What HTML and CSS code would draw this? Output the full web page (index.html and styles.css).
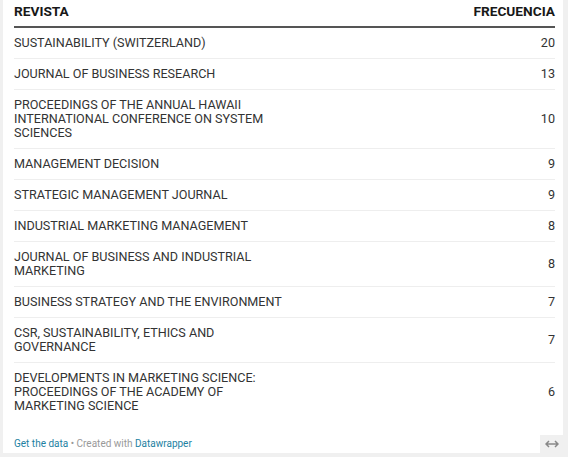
FILE: index.html
```html
<!DOCTYPE html>
<html lang="es">
<head>
    <meta charset="UTF-8">
    <title>Revistas</title>
    <link rel="stylesheet" href="styles.css">
</head>
<body>
    <div class="chart">
        <table class="table">
            <thead>
                <tr>
                    <th class="name">REVISTA</th>
                    <th class="num">FRECUENCIA</th>
                </tr>
            </thead>
            <tbody>
                <tr><td class="name">SUSTAINABILITY (SWITZERLAND)</td><td class="num">20</td></tr>
                <tr><td class="name">JOURNAL OF BUSINESS RESEARCH</td><td class="num">13</td></tr>
                <tr><td class="name">PROCEEDINGS OF THE ANNUAL HAWAII INTERNATIONAL CONFERENCE ON SYSTEM SCIENCES</td><td class="num">10</td></tr>
                <tr><td class="name">MANAGEMENT DECISION</td><td class="num">9</td></tr>
                <tr><td class="name">STRATEGIC MANAGEMENT JOURNAL</td><td class="num">9</td></tr>
                <tr><td class="name">INDUSTRIAL MARKETING MANAGEMENT</td><td class="num">8</td></tr>
                <tr><td class="name">JOURNAL OF BUSINESS AND INDUSTRIAL MARKETING</td><td class="num">8</td></tr>
                <tr><td class="name">BUSINESS STRATEGY AND THE ENVIRONMENT</td><td class="num">7</td></tr>
                <tr><td class="name">CSR, SUSTAINABILITY, ETHICS AND GOVERNANCE</td><td class="num">7</td></tr>
                <tr><td class="name">DEVELOPMENTS IN MARKETING SCIENCE: PROCEEDINGS OF THE ACADEMY OF MARKETING SCIENCE</td><td class="num">6</td></tr>
            </tbody>
        </table>
        <div class="footer">
            <a href="#">Get the data</a> <span class="sep">•</span> Created with <a href="#">Datawrapper</a>
        </div>
    </div>
    <div class="resize">
        <svg width="14" height="8" viewBox="0 0 14 8">
            <path d="M1 4h12M4 1L1 4l3 3M10 1l3 3-3 3" fill="none" stroke="#888" stroke-width="1.5"/>
        </svg>
    </div>
</body>
</html>
```

FILE: styles.css
```css
body {
    margin: 0;
    background: #f0f0f0;
    font-family: Roboto, "Liberation Sans", sans-serif;
    color: #333;
    width: 568px;
    height: 457px;
    position: relative;
    overflow: hidden;
}
.chart {
    margin-left: 3px;
    width: 560px;
    height: 453px;
    background: white;
    box-sizing: border-box;
    padding: 0 8px 0 11px;
    display: flex;
    flex-direction: column;
}
.table {
    width: 100%;
    border-collapse: collapse;
    table-layout: fixed;
    font-size: 12.6px;
}
th {
    font-weight: bold;
    font-size: 13.7px;
    color: #181818;
    padding: 4px 0 7px;
    border-bottom: 2px solid #555;
    line-height: 15px;
}
td {
    padding: 8px 0 8px;
    border-bottom: 1px solid #eee;
    line-height: 14px;
}
tbody tr:last-child td {
    border-bottom: none;
}
.name {
    text-align: left;
    width: 276px;
}
.num {
    text-align: right;
}
.footer {
    margin-top: auto;
    padding-bottom: 4px;
    font-size: 10px;
    color: #999;
}
.footer a {
    color: #1d81a2;
    text-decoration: none;
}
.resize {
    position: absolute;
    left: 540px;
    top: 435px;
    width: 23px;
    height: 18px;
    background: #f0f0f0;
    display: flex;
    align-items: center;
    justify-content: center;
}
```
